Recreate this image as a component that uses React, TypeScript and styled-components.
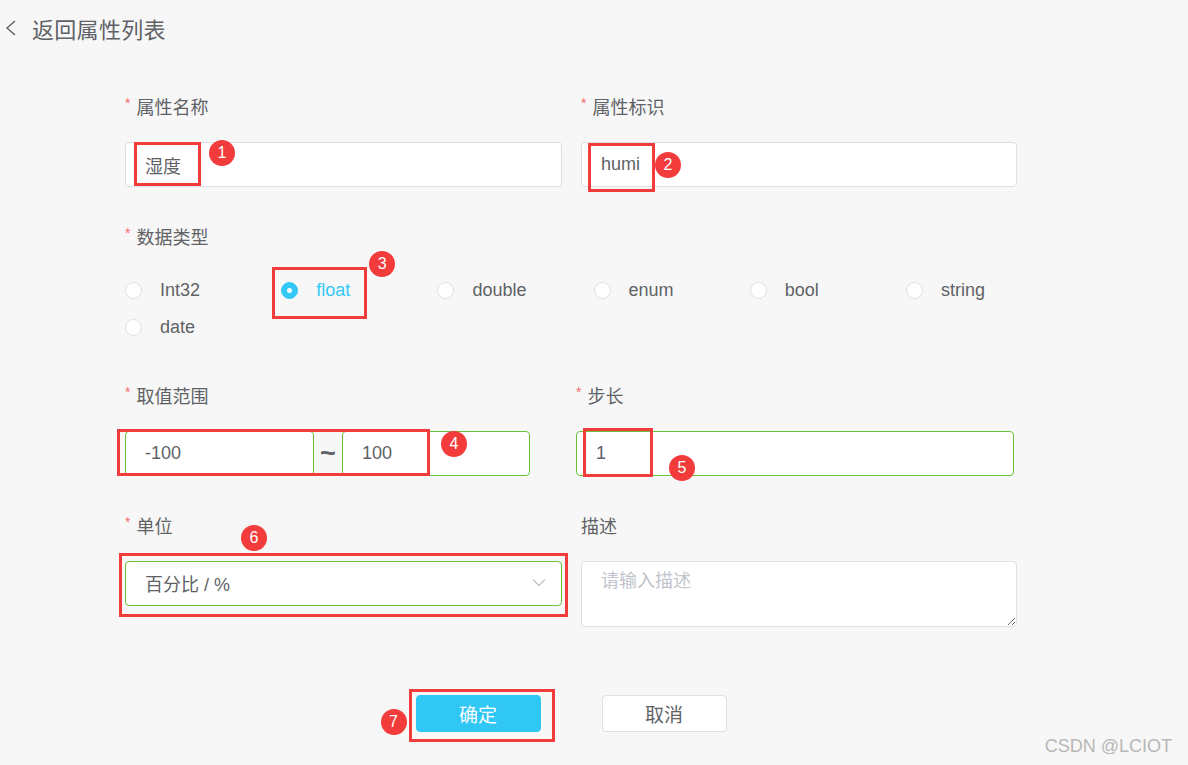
import React from 'react'
import styled, { createGlobalStyle } from 'styled-components'

const GlobalStyle = createGlobalStyle`
  * { box-sizing: border-box; }
  body {
    margin: 0;
    background: #f7f7f7;
    font-family: "Liberation Sans", "Noto Sans CJK SC", sans-serif;
    color: #606266;
  }
`

const Page = styled.div`
  position: relative;
  min-height: 100vh;
  background: #f7f7f7;
`

const Header = styled.div`
  height: 56px;
  display: flex;
  align-items: center;
  padding-left: 5px;
  gap: 15px;
  cursor: pointer;
`

const Title = styled.span`
  font-size: 22px;
  color: #5f6166;
  letter-spacing: 0.3px;
`

const Form = styled.div`
  display: flex;
  flex-direction: column;
  gap: 37px;
  padding: 38px 0 0 125px;
`

const Row = styled.div<{ $cols: string; $gap: number }>`
  display: grid;
  grid-template-columns: ${({ $cols }) => $cols};
  column-gap: ${({ $gap }) => $gap}px;
`

const Field = styled.div`
  display: flex;
  flex-direction: column;
  gap: 24px;
`

const Label = styled.label<{ $required?: boolean }>`
  display: flex;
  align-items: center;
  height: 24px;
  font-size: 18px;
  color: #606266;
  &::before {
    content: ${({ $required }) => ($required ? "'*'" : 'none')};
    color: #f56c6c;
    font-size: 14px;
    margin-right: 6px;
    position: relative;
    top: -3px;
  }
`

const Control = styled.div`
  position: relative;
`

const TextInput = styled.input<{ $ok?: boolean }>`
  display: block;
  width: 100%;
  height: 45px;
  padding: 0 19px;
  border: 1px solid ${({ $ok }) => ($ok ? '#67c23a' : '#dcdfe6')};
  border-radius: 4px;
  background: #fff;
  font-family: "Liberation Sans", "Noto Sans CJK SC", sans-serif;
  font-size: 18px;
  color: #606266;
  outline: none;
`

const RangeBox = styled.div`
  position: relative;
  display: grid;
  grid-template-columns: 189px 28px 188px;
`

const Tilde = styled.span`
  display: flex;
  align-items: center;
  justify-content: center;
  font-size: 27px;
  font-weight: bold;
  color: #606266;
`

const RadioGroup = styled.div`
  display: grid;
  grid-template-columns: repeat(6, 156.2px);
`

const RadioItem = styled.div<{ $checked?: boolean }>`
  position: relative;
  height: 37px;
  display: flex;
  align-items: center;
  gap: 18px;
  font-size: 18px;
  color: ${({ $checked }) => ($checked ? '#33c8f6' : '#606266')};
`

const RadioDot = styled.span<{ $checked?: boolean }>`
  width: 17px;
  height: 17px;
  border-radius: 50%;
  border: 1px solid ${({ $checked }) => ($checked ? '#33c8f6' : '#dcdfe6')};
  background: ${({ $checked }) => ($checked ? '#33c8f6' : '#fff')};
  display: flex;
  align-items: center;
  justify-content: center;
  flex-shrink: 0;
  &::after {
    content: '';
    width: 5px;
    height: 5px;
    border-radius: 50%;
    background: #fff;
    display: ${({ $checked }) => ($checked ? 'block' : 'none')};
  }
`

const SelectBox = styled.div`
  height: 45px;
  display: flex;
  align-items: center;
  justify-content: space-between;
  padding: 0 15px 2px 19px;
  border: 1px solid #67c23a;
  border-radius: 4px;
  background: #fff;
  font-size: 18px;
  color: #606266;
`

const TextArea = styled.textarea`
  display: block;
  width: 100%;
  height: 66px;
  padding: 7px 19px;
  border: 1px solid #dcdfe6;
  border-radius: 4px;
  background: #fff;
  font-family: "Liberation Sans", "Noto Sans CJK SC", sans-serif;
  font-size: 18px;
  line-height: 24px;
  color: #606266;
  outline: none;
  resize: vertical;
  &::placeholder {
    color: #c0c4cc;
  }
`

const Actions = styled.div`
  display: flex;
  justify-content: center;
  gap: 61px;
  width: 892px;
  margin-top: 31px;
`

const Button = styled.button<{ $primary?: boolean }>`
  position: relative;
  width: 125px;
  height: 37px;
  border-radius: 4px;
  border: 1px solid ${({ $primary }) => ($primary ? '#31c7f5' : '#dcdfe6')};
  background: ${({ $primary }) => ($primary ? '#31c7f5' : '#fff')};
  color: ${({ $primary }) => ($primary ? '#fff' : '#606266')};
  font-family: "Liberation Sans", "Noto Sans CJK SC", sans-serif;
  font-size: 19px;
  cursor: pointer;
`

/* red annotation marks drawn over the form */
const Mark = styled.span<{ $l: number; $t: number; $w: number; $h: number }>`
  position: absolute;
  left: ${({ $l }) => $l}px;
  top: ${({ $t }) => $t}px;
  width: ${({ $w }) => $w}px;
  height: ${({ $h }) => $h}px;
  border: 3px solid #f23b3b;
  pointer-events: none;
`

const Badge = styled.span<{ $l: number; $t: number }>`
  position: absolute;
  left: ${({ $l }) => $l}px;
  top: ${({ $t }) => $t}px;
  width: 26px;
  height: 26px;
  border-radius: 50%;
  background: #f23b3b;
  color: #fff;
  font-family: "Liberation Sans", sans-serif;
  font-size: 16px;
  line-height: 26px;
  text-align: center;
`

const Watermark = styled.div`
  position: absolute;
  right: 16px;
  bottom: 8px;
  font-family: "Liberation Sans", sans-serif;
  font-size: 18px;
  color: #b8b8b8;
`

const BackIcon = () => (
  <svg width="12" height="16" viewBox="0 0 12 16">
    <polyline points="10,1 2,8 10,15" fill="none" stroke="#606266" strokeWidth="1.4" />
  </svg>
)

const ChevronDown = () => (
  <svg width="14" height="9" viewBox="0 0 14 9">
    <polyline points="1,1.5 7,7.5 13,1.5" fill="none" stroke="#c0c4cc" strokeWidth="1.3" />
  </svg>
)

const types = ['Int32', 'float', 'double', 'enum', 'bool', 'string', 'date']

export default function App() {
  return (
    <Page>
      <GlobalStyle />
      <Header>
        <BackIcon />
        <Title>返回属性列表</Title>
      </Header>

      <Form>
        <Row $cols="437px 436px" $gap={19}>
          <Field>
            <Label $required>属性名称</Label>
            <Control>
              <TextInput defaultValue="湿度" />
              <Mark $l={9} $t={0} $w={67} $h={44} />
              <Badge $l={84} $t={-2}>1</Badge>
            </Control>
          </Field>
          <Field>
            <Label $required>属性标识</Label>
            <Control>
              <TextInput defaultValue="humi" />
              <Mark $l={7} $t={1} $w={67} $h={49} />
              <Badge $l={74} $t={10}>2</Badge>
            </Control>
          </Field>
        </Row>

        <Field>
          <Label $required>数据类型</Label>
          <RadioGroup>
            {types.map((t) => (
              <RadioItem key={t} $checked={t === 'float'}>
                <RadioDot $checked={t === 'float'} />
                {t}
                {t === 'float' && (
                  <>
                    <Mark $l={-9} $t={-5} $w={95} $h={52} />
                    <Badge $l={88} $t={-21}>3</Badge>
                  </>
                )}
              </RadioItem>
            ))}
          </RadioGroup>
        </Field>

        <Row $cols="405px 438px" $gap={46}>
          <Field>
            <Label $required>取值范围</Label>
            <RangeBox>
              <TextInput $ok defaultValue="-100" />
              <Tilde>~</Tilde>
              <TextInput $ok defaultValue="100" />
              <Mark $l={-8} $t={-2} $w={313} $h={47} />
              <Badge $l={316} $t={0}>4</Badge>
            </RangeBox>
          </Field>
          <Field>
            <Label $required>步长</Label>
            <Control>
              <TextInput $ok defaultValue="1" />
              <Mark $l={7} $t={-3} $w={70} $h={49} />
              <Badge $l={93} $t={24}>5</Badge>
            </Control>
          </Field>
        </Row>

        <Row $cols="437px 436px" $gap={19}>
          <Field>
            <Label $required>单位</Label>
            <Control>
              <SelectBox>
                百分比 / %
                <ChevronDown />
              </SelectBox>
              <Mark $l={-6} $t={-8} $w={449} $h={64} />
              <Badge $l={116} $t={-36}>6</Badge>
            </Control>
          </Field>
          <Field>
            <Label>描述</Label>
            <TextArea placeholder="请输入描述" />
          </Field>
        </Row>

        <Actions>
          <Button $primary>
            确定
            <Mark $l={-8} $t={-7} $w={146} $h={53} />
            <Badge $l={-36} $t={13}>7</Badge>
          </Button>
          <Button>取消</Button>
        </Actions>
      </Form>

      <Watermark>CSDN @LCIOT</Watermark>
    </Page>
  )
}
